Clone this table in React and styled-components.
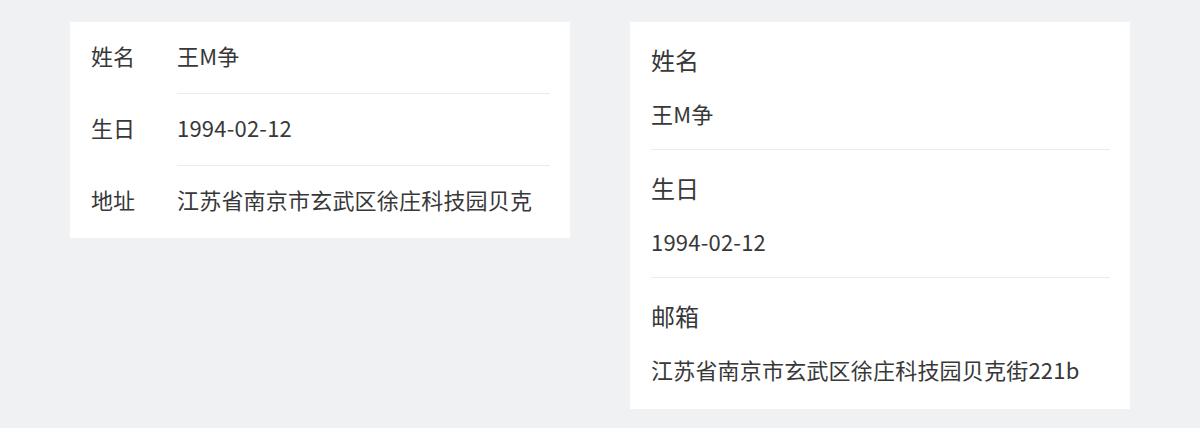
import React from "react";
import styled, { createGlobalStyle } from "styled-components";

const GlobalStyle = createGlobalStyle`
  html, body {
    margin: 0;
    padding: 0;
    background: #f0f1f3;
    font-family: "Noto Sans CJK SC", "Noto Sans", sans-serif;
    color: #383838;
  }
`;

const Page = styled.div`
  display: flex;
  align-items: flex-start;
  gap: 60px;
  padding: 22px 70px;
`;

const Card = styled.div`
  width: 500px;
  background: #fff;
  box-sizing: border-box;
  padding: ${(p) => (p.$stacked ? "0 20px 3px 21px" : "0 20px")};
`;

const Row = styled.div`
  display: flex;
  align-items: stretch;
`;

const RowLabel = styled.div`
  width: 86px;
  flex-shrink: 0;
  font-size: 22px;
  line-height: 22px;
  padding: 22px 0 27px 1px;
`;

const RowValue = styled.div`
  flex: 1;
  font-size: 22px;
  line-height: 22px;
  letter-spacing: 0.2px;
  padding: 22px 0 27px;
  border-bottom: 1px solid ${(p) => (p.$last ? "transparent" : "#ebebeb")};
  white-space: nowrap;
`;

const Item = styled.div`
  padding: 26px 0 25px;
  border-bottom: 1px solid ${(p) => (p.$last ? "transparent" : "#ebebeb")};
`;

const ItemLabel = styled.div`
  font-size: 24px;
  line-height: 24px;
  margin-bottom: 30px;
`;

const ItemValue = styled.div`
  font-size: 22px;
  line-height: 22px;
  letter-spacing: 0.2px;
  white-space: nowrap;
`;

const rowsLeft = [
  ["姓名", "王M争"],
  ["生日", "1994-02-12"],
  ["地址", "江苏省南京市玄武区徐庄科技园贝克"],
];

const rowsRight = [
  ["姓名", "王M争"],
  ["生日", "1994-02-12"],
  ["邮箱", "江苏省南京市玄武区徐庄科技园贝克街221b"],
];

export default function App() {
  return (
    <>
      <GlobalStyle />
      <Page>
        <Card>
          {rowsLeft.map(([k, v], i) => (
            <Row key={k}>
              <RowLabel>{k}</RowLabel>
              <RowValue $last={i === rowsLeft.length - 1}>{v}</RowValue>
            </Row>
          ))}
        </Card>
        <Card $stacked>
          {rowsRight.map(([k, v], i) => (
            <Item key={k} $last={i === rowsRight.length - 1}>
              <ItemLabel>{k}</ItemLabel>
              <ItemValue>{v}</ItemValue>
            </Item>
          ))}
        </Card>
      </Page>
    </>
  );
}
